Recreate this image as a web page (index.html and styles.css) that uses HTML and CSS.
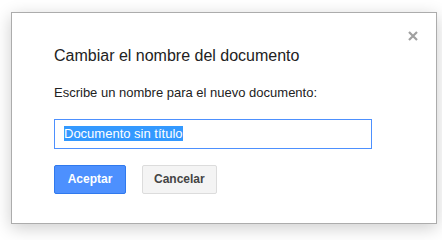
FILE: index.html
```html
<!DOCTYPE html>
<html lang="es">
<head>
<meta charset="utf-8">
<link rel="stylesheet" href="styles.css">
</head>
<body>
<div class="stage">
  <div class="dialog">
    <svg class="close" width="10" height="10" viewBox="0 0 10 10"><path d="M1 1L9 9M9 1L1 9" stroke="#a0a0a0" stroke-width="2.2" fill="none"/></svg>
    <div class="title">Cambiar el nombre del documento</div>
    <div class="label">Escribe un nombre para el nuevo documento:</div>
    <div class="input"><span class="sel">Documento sin título</span></div>
    <div class="buttons">
      <div class="btn primary">Aceptar</div>
      <div class="btn">Cancelar</div>
    </div>
  </div>
</div>
</body>
</html>
```
FILE: styles.css
```css
html, body { margin: 0; background: #fff; }
body { font-family: Arial, "Liberation Sans", sans-serif; color: #222; min-height: 240px; }
.stage { padding: 12px 0 0 11px; height: 240px; box-sizing: border-box; }
.dialog {
  position: relative;
  box-sizing: border-box;
  width: 426px;
  height: 212px;
  border: 1px solid #acacac;
  background: #fff;
  box-shadow: 0 4px 16px rgba(0,0,0,0.2);
  padding: 33px 20px 0 42px;
}
.close { position: absolute; top: 18px; right: 18px; }
.title { font-size: 16px; line-height: 20px; color: #222; }
.label { font-size: 13px; line-height: 16px; margin-top: 19px; color: #222; }
.input {
  box-sizing: border-box;
  width: 318px;
  height: 30px;
  margin-top: 18px;
  border: 1px solid #4d90fe;
  padding: 6px 0 0 9px;
  font-size: 13px;
  line-height: 15px;
}
.sel { background: #3399ff; color: #fff; }
.buttons { display: flex; gap: 16px; margin-top: 16px; }
.btn {
  box-sizing: border-box;
  height: 29px;
  line-height: 27px;
  padding: 0 11px;
  min-width: 72px;
  text-align: center;
  font-size: 12px;
  font-weight: bold;
  border: 1px solid #dcdcdc;
  border-radius: 2px;
  background: #f4f4f4;
  color: #444;
}
.primary { background: #4d90fe; border-color: #3079ed; color: #fff; }
```
